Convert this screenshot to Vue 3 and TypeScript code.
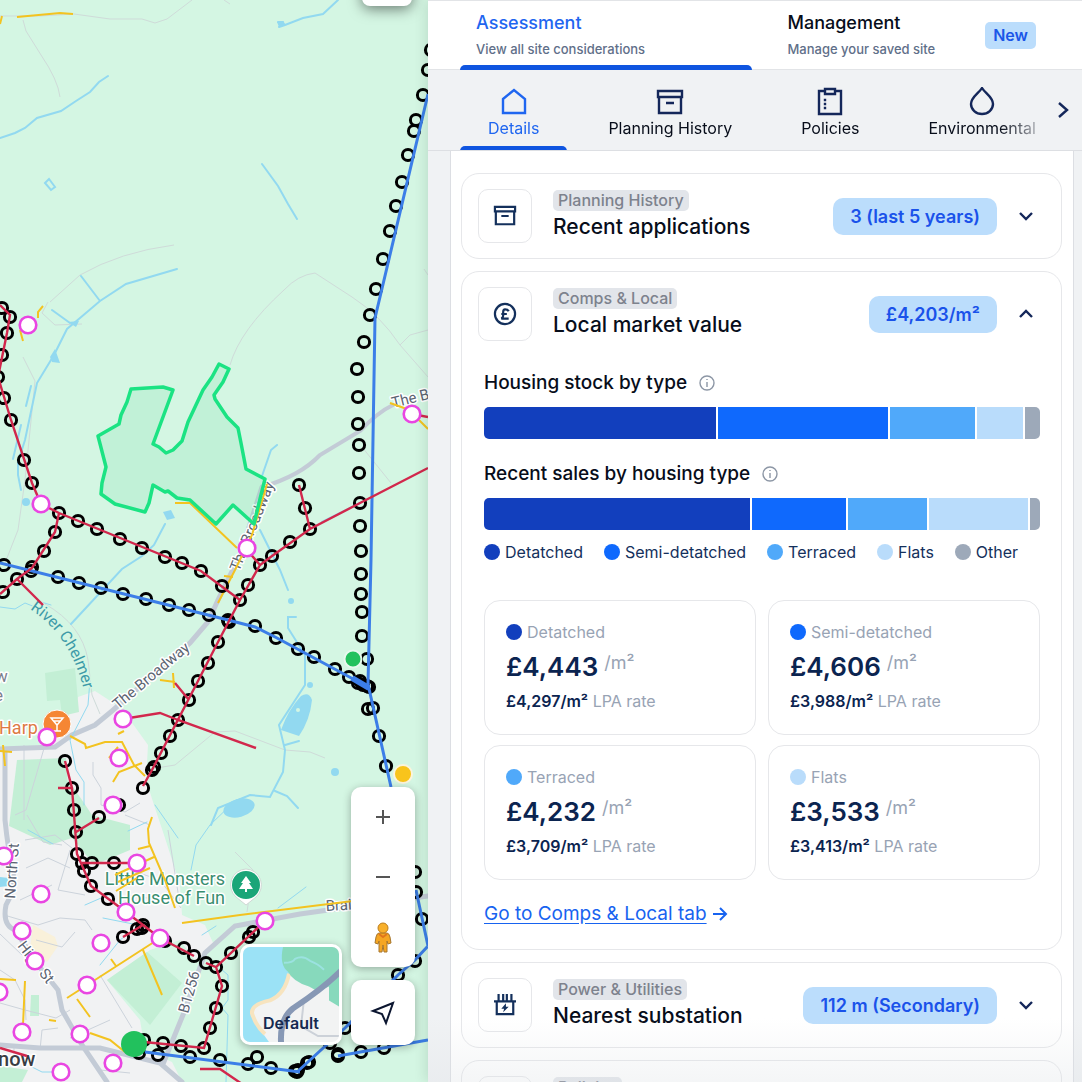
<script setup lang="ts">
import { ref } from 'vue'

type Point = [number, number]
interface Share { name: string; value: number }
interface Price { name: string; rate: string; lpa: string }

const poles: Point[] = [
  [431, 50], [428, 70], [423, 95], [416, 120], [414, 131], [408, 155], [402, 182], [396, 206], [390, 231], [383, 259],
  [376, 289], [370, 315], [364, 342], [357, 369], [358, 397], [358, 424], [359, 445], [359, 473], [360, 503], [360, 526],
  [361, 551], [361, 574], [361, 594], [362, 612], [362, 636], [367, 659], [367, 686], [369, 687], [368, 709], [373, 708],
  [379, 736], [386, 766], [4, 565], [32, 567], [31, 571], [58, 577], [79, 583], [101, 588], [123, 594], [146, 599],
  [169, 605], [189, 610], [209, 615], [228, 620], [229, 622], [255, 626], [276, 638], [298, 649], [314, 657], [335, 669],
  [349, 677], [360, 681], [358, 683], [363, 685], [2, 308], [10, 317], [7, 333], [2, 355], [-2, 377], [4, 398],
  [11, 420], [24, 460], [32, 483], [59, 513], [55, 532], [44, 551], [17, 579], [3, 592], [78, 521], [97, 529],
  [120, 539], [142, 548], [165, 557], [182, 563], [201, 571], [222, 586], [240, 600], [248, 585], [260, 565], [272, 556],
  [290, 542], [310, 529], [305, 508], [299, 485], [218, 642], [208, 663], [198, 681], [189, 700], [178, 720], [170, 736],
  [161, 753], [154, 767], [152, 770], [143, 788], [65, 761], [72, 788], [74, 810], [76, 832], [77, 854], [82, 863],
  [84, 871], [91, 886], [108, 899], [99, 817], [92, 863], [114, 863], [119, 805], [143, 925], [142, 928], [137, 929],
  [123, 937], [165, 941], [184, 948], [194, 956], [206, 963], [216, 967], [231, 953], [222, 986], [216, 1008], [210, 1028],
  [204, 1048], [181, 1046], [163, 1043], [144, 1040], [139, 1053], [158, 1055], [190, 1057], [220, 1060], [248, 1064],
  [257, 1057], [271, 1068], [295, 1071], [297, 1072], [298, 1070], [307, 1063], [309, 1062], [330, 1043], [345, 1028],
  [338, 1056], [338, 1054], [361, 1052], [384, 1048], [415, 872], [416, 892], [422, 919], [415, 961], [398, 975],
  [249, 937], [253, 932],
]

const sites: Point[] = [
  [28, 325], [41, 504], [247, 548], [412, 414], [123, 719], [119, 758], [47, 737], [113, 805], [137, 863], [126, 912],
  [160, 938], [41, 894], [22, 931], [35, 961], [101, 943], [87, 985], [22, 1032], [-1, 992], [80, 1034], [61, 1072],
  [113, 1063], [4, 856], [265, 921],
]

const stock: Share[] = [
  { name: 'detached', value: 232 },
  { name: 'semi', value: 170 },
  { name: 'terraced', value: 85 },
  { name: 'flats', value: 46 },
  { name: 'other', value: 15 },
]
const sales: Share[] = [
  { name: 'detached', value: 266 },
  { name: 'semi', value: 94 },
  { name: 'terraced', value: 79 },
  { name: 'flats', value: 99 },
  { name: 'other', value: 10 },
]
const bars = [
  { title: 'Housing stock by type', shares: stock },
  { title: 'Recent sales by housing type', shares: sales },
]
const labels: Record<string, string> = {
  detached: 'Detatched',
  semi: 'Semi-detatched',
  terraced: 'Terraced',
  flats: 'Flats',
  other: 'Other',
}
const prices: Price[] = [
  { name: 'detached', rate: '£4,443', lpa: '£4,297/m²' },
  { name: 'semi', rate: '£4,606', lpa: '£3,988/m²' },
  { name: 'terraced', rate: '£4,232', lpa: '£3,709/m²' },
  { name: 'flats', rate: '£3,533', lpa: '£3,413/m²' },
]
const sections = ['Details', 'Planning History', 'Policies', 'Environmental']
const activeSection = ref('Details')
const marketOpen = ref(true)
</script>

<template>
  <div class="app">
    <section class="map" aria-label="Site map">
      <svg class="map-canvas" viewBox="0 0 428 1082" preserveAspectRatio="xMaxYMin slice">
        <rect width="428" height="1082" fill="#d4f6e3" />
        <!-- built-up area -->
        <path fill="#f1f2f3" d="M0 751 L45 744 L66 720 L78 697 L95 691 L112 702 L125 713 L148 745 L146 780 L154 805 L165 838 L180 885 L182 915 L205 925 L214 945 L196 962 L180 940 L150 950 L107 980 L140 1020 L145 1050 L172 1062 L182 1082 L0 1082 Z" />
        <g fill="#c3efd5">
          <path d="M17 760 L66 758 L72 838 L50 845 L9 826 Z" />
          <path d="M45 673 L75 668 L79 712 L62 716 L60 700 L47 701 Z" />
          <path d="M68 780 L82 800 L92 815 L130 825 L130 850 L94 865 L70 835 Z" />
          <path d="M107 980 L147 952 L182 983 L150 1025 Z" />
          <path d="M31 995 h8 v21 h-9 z" />
          <path d="M0 1066 L28 1070 L22 1082 L0 1082 Z" />
        </g>
        <path fill="#f9f1da" d="M33 925 L55 937 L58 946 L47 962 L30 948 Z" />

        <!-- minor tracks -->
        <g fill="none" stroke="#cfdbd9" stroke-width="1">
          <path d="M0 16 L40 16 L74 14 L110 19 L142 19 L155 23 L167 19 L192 0 M23 20 L26 31 L41 55 Q58 80 60 97 M224 0 L230 4" />
          <path d="M23 357 L35 381 L25 480 L18 530 L5 563 M50 302 L80 275 Q120 252 174 245 M48 302 L42 313 L55 325 L82 324 M284 290 Q240 330 230 365 M284 290 Q298 275 315 273 L352 297 Q380 315 400 345 L428 377 M424 269 L428 275 M400 345 L410 335 L428 330 M362 447 L391 483" />
          <path d="M45 604 Q82 625 88 660 L92 695 L100 714 M150 769 L175 765 L215 732 L235 731 L285 750 L310 752 L325 758" />
          <path d="M235 852 L253 870 L247 912" />
        </g>
        <g fill="none" stroke="#ccd3db" stroke-width="1">
          <path d="M24 745 L24 820 M93 762 L93 775 L101 788 L101 805 L125 812 L140 803 M27 815 L43 842 L62 845 M25 840 L55 835 L72 848 M26 868 L48 858 L70 868 M70 850 L58 890 L85 895 M20 900 L52 885 M4 915 L38 925 L60 918 L85 920 L92 930 M36 940 L62 947 L75 932 M70 1038 L110 1020 M100 975 L132 1028 M14 1048 L14 1060 M40 1050 L42 1030 L58 1028 M100 1070 L130 1073 M130 870 L160 880 L181 908 M168 830 L180 905 M128 895 L160 900 M125 815 L150 825 M45 745 L26 810 L15 815" />
          <path d="M0 934 L22 955 M0 970 L15 980 L25 1000 L26 1020 M0 1003 L25 1010 L56 1018 L70 1010" />
        </g>
        <g fill="none" stroke="#c3cbd6" stroke-linecap="round">
          <path stroke-width="5" d="M0 749 L55 747 L72 735 L95 725 L112 711 L190 643 L208 622 L218 600 L240 555 L262 487" />
          <path stroke-width="4" d="M262 487 Q300 476 320 455 Q345 440 360 431 Q378 412 393 405" />
          <path stroke-width="5" d="M5 750 L5 820 Q8 850 13 870 Q15 890 6 905 Q2 925 15 930 L38 965 L58 990 L62 1010 L82 1045 L107 1082" />
          <path stroke-width="5" d="M0 1045 L40 1048 L100 1048 L160 1063 L182 1082 M163 1064 L185 1010 L205 953 L235 926 L300 914 L428 896" />
        </g>

        <!-- watercourses -->
        <g fill="none" stroke="#92d9f0" stroke-width="2" stroke-linecap="round">
          <path d="M0 138 L15 133 L25 128 L37 118 L61 111 L76 101 L90 92 L99 82 L108 76 M279 27 L285 25 L303 18 L323 14 L338 0 M278 22 L283 22 M262 164 L278 186 L288 204 L297 219" />
          <path d="M177 269 L126 284 L100 301 L80 318 L67 329 L54 355 L37 383 L25 440 L18 462 L18 475 L21 490 M81 276 L100 301 M52 310 L70 323 M31 386 L26 406 M21 425 L13 459 M277 445 L271 450 L262 476" />
          <path d="M165 524 L154 545 L142 556 L122 569 L71 624 M360 503 L322 522 M260 530 L280 570 L288 590 M296 617 L288 617 L288 628 L305 655 L305 685 L279 725 L285 750 L283 772 L270 797 L250 795 L218 808 L211 825 M299 741 L285 745 M275 791 L287 796 L298 808" />
          <path d="M0 607 L15 609 L25 603 L35 607 L41 602 L51 605 M90 680 L88 705 L70 740 L76 770 L84 782 L84 805 M210 825 L196 845 L191 870 M236 800 L210 825 M155 805 L178 838 M28 830 L53 844 M128 831 L147 822 M85 905 L108 895 M103 918 L143 926 M140 925 L120 940 L100 965 M32 1067 L42 1072 L62 1072 M202 935 L216 926 M278 908 L306 887 M221 969 L228 975 L228 1000 L222 1008 L228 1015 L226 1082" stroke-width="1" />
        </g>
        <g fill="#92d9f0">
          <path d="M301 696 Q309 691 312 700 Q310 720 299 736 L281 730 Q288 710 301 696Z" />
          <ellipse cx="239" cy="808" rx="16" ry="9" transform="rotate(-15 239 808)" />
          <path d="M277 22 l6 -1 l3 4 l-7 2z M50 357 l5 -8 l5 14 l-8 -1z M68 322 l11 -1 l-3 6z M163 512 l8 -2 l4 8 l-8 2z" />
          <path d="M45 183 l4 -4 l6 8 l-4 3z" fill="none" stroke="#92d9f0" stroke-width="2" />
          <circle cx="26" cy="502" r="4" /><circle cx="335" cy="772" r="4" /><circle cx="291" cy="601" r="3" />
          <circle cx="310" cy="685" r="3" /><path d="M0 877 L9 878 L8 886 L0 887Z" />
        </g>
        <circle cx="298" cy="710" r="2" fill="#d4f6e3" />

        <!-- street labels -->
        <g class="street">
          <text x="118" y="710" transform="rotate(-40 118 710)">The Broadway</text>
          <text x="239" y="572" transform="rotate(-68 239 572)">The Broadway</text>
          <text x="393" y="408" transform="rotate(-14 393 408)">The Br</text>
          <text x="15" y="899" transform="rotate(-86 15 899)">North St</text>
          <text x="17" y="946" transform="rotate(52 17 946)">High St</text>
          <text x="188" y="1014" transform="rotate(-74 188 1014)">B1256</text>
          <text x="326" y="911" transform="rotate(-3 326 911)">Brai</text>
        </g>
        <path id="river-label" fill="none" d="M30 609 Q74 638 86 700" />
        <text class="river"><textPath href="#river-label">River Chelmer</textPath></text>
        <text class="suburb" x="-5" y="682">w</text>
        <text class="suburb" x="-6" y="701">e</text>
        <text class="poi-food" x="-1" y="734">Harp</text>
        <g class="poi-park">
          <text x="225" y="885">Little Monsters</text>
          <text x="225" y="904">House of Fun</text>
        </g>
        <text class="town" x="-2" y="1066">now</text>

        <!-- low voltage cables -->
        <g fill="none" stroke="#f3c320" stroke-width="2">
          <path d="M17 17 L60 13 L73 14 M2 16 L0 24 M43 306 L38 312 L38 318 M20 330 L23 341 M390 403 L404 408 L412 414 M419 420 L428 429" />
          <path d="M267 484 L252 535 L235 570 L218 603 M224 576 L233 577 M175 503 L190 503 L237 548 M160 680 L175 682 M173 673 L174 688" />
          <path d="M70 736 L85 744 L86 748 L105 742 L122 742 L134 765 L145 776 M113 782 L119 772 L142 763 M118 747 L109 758 M118 734 L124 731 M0 751 L12 752 M3 745 L5 766 M152 817 L148 829 L149 843 L165 880 L175 908 M138 849 L150 846 M137 878 L116 891 M150 868 L118 882 M154 857 L115 875" />
          <path d="M182 923 L240 915 L353 901 M154 942 L67 998 M143 950 L162 995 M111 959 L116 966 M77 999 L90 1017 M90 1033 L110 1040 L125 1052 M25 981 L23 1025 M0 979 L16 980 M49 1020 L56 1021" />
        </g>

        <path class="parcel" d="M131 389 L163 387 L173 390 L153 444 L159 447 L166 453 L173 450 L182 441 L188 422 L203 390 L212 377 L219 364 L229 369 L223 382 L214 395 L215 399 L227 417 L238 428 L241 443 L246 469 L265 479 L259 503 L254 524 L233 505 L216 524 L190 500 L177 498 L168 491 L165 492 L153 485 L149 503 L145 512 L115 504 L101 494 L102 483 L106 467 L98 436 L119 424 L121 415 L127 402 Z" />

        <g fill="none" stroke="#000" stroke-width="3">
          <circle v-for="(p, i) in poles" :key="i" :cx="p[0]" :cy="p[1]" r="5.6" />
        </g>
        <!-- 33kV and 132kV lines -->
        <g fill="none" stroke="#3c7ee8" stroke-width="3">
          <path d="M428 94 L380 297 L375 318 L371 560 L368 684 L391 787" />
          <path d="M0 563 L228 620 L255 627 L277 638 L368 687" />
          <path d="M145 1052 L300 1072 M297 1072 L345 1028 L398 975 L415 960 L428 946 L416 890 M338 1056 L428 1040" />
        </g>
        <path d="M352 678 L369 688" stroke="#3c7ee8" stroke-width="6" />
        <!-- 11kV lines -->
        <g fill="none" stroke="#d2274c" stroke-width="2.4">
          <path d="M0 305 L10 315 L7 333 L-2 377 L11 420 L32 483 L41 504 L59 513 L201 571 L240 600 M59 513 L55 532 L32 568 L17 579 L0 594 M17 579 L43 605" />
          <path d="M428 468 L360 503 L310 529 L272 556 L260 565 L240 600 L218 642 L198 681 L152 770 L143 786 M299 485 L310 529 M247 550 L260 565 M175 683 L189 700 M123 719 L160 713 L178 720 L256 748" />
          <path d="M65 761 L72 788 L77 854 L91 886 L126 912 L143 925 L160 938 L194 956 M58 788 L72 788 M76 832 L99 818 M82 863 L137 863 M143 925 L123 937 M206 963 L216 967 L265 921 M216 967 L222 986 L204 1048 L134 1041 M200 1069 L220 1069 L245 1086 M0 1048 L27 1056 M412 414 L428 417" />
        </g>

        <circle cx="57" cy="724" r="14" fill="#f58634" stroke="#fff" stroke-width="1" />
        <path d="M51 718 H63 L57 725 Z M57 725 V731 M53 731 H61 M54 721 H60" fill="none" stroke="#fff" stroke-width="1.5" />
        <g class="sites">
          <circle v-for="(p, i) in sites" :key="i" :cx="p[0]" :cy="p[1]" r="8.3" />
        </g>
        <circle cx="134" cy="1044" r="13" fill="#22c15d" />
        <circle cx="353" cy="659" r="8.5" fill="#22c15d" stroke="#e6f8ed" stroke-width="2" />
        <circle cx="403" cy="774" r="9" fill="#f8c41c" stroke="#fbf4dd" stroke-width="2" />
        <path d="M246 869 a16 16 0 0 1 10 28 L246 905 L236 897 a16 16 0 0 1 10 -28Z" fill="#fff" stroke="#cfd8d4" stroke-width="1" />
        <circle cx="246" cy="885" r="14" fill="#1aa578" />
        <path d="M246 876 L251 883 H249 L253 889 H247 V892 H245 V889 H239 L243 883 H241 Z" fill="#fff" />
      </svg>

      <div class="map-tool"></div>
      <div class="map-controls">
        <button class="basemap" type="button">
          <svg viewBox="0 0 96 96" preserveAspectRatio="none" aria-hidden="true">
            <rect width="96" height="96" fill="#f2f3f3" />
            <path d="M0 0 H46 Q50 20 45 30 Q40 47 26 53 Q8 56 9 68 Q15 82 26 96 H0Z" fill="#9be2f6" />
            <path d="M46 27 Q42 48 27 54 Q8 58 9 67 Q13 80 22 88" fill="none" stroke="#f7e4bf" stroke-width="4" />
            <path d="M40 0 H96 V60 L86 54 V40 L75 45 L66 40 Q50 35 45 25 Q36 18 40 0Z" fill="#87d9bc" />
            <path d="M41 16 Q50 16 52 12 Q60 8 67 14 Q75 17 81 23" fill="none" stroke="#9be2e0" stroke-width="2" />
            <path d="M61 53 L58 80 L75 90 H96" fill="none" stroke="#ccd1d8" stroke-width="2" />
            <path d="M38 96 Q37 72 50 62 Q80 42 98 24" fill="none" stroke="#8798b5" stroke-width="6" />
          </svg>
          <span>Default</span>
        </button>
        <div class="map-stack">
          <div class="zoom">
            <button type="button" aria-label="Zoom in">
              <svg width="20" height="20" viewBox="0 0 20 20"><path d="M10 3 V17 M3 10 H17" stroke="#555" stroke-width="2" /></svg>
            </button>
            <button type="button" aria-label="Zoom out">
              <svg width="20" height="20" viewBox="0 0 20 20"><path d="M3 10 H17" stroke="#555" stroke-width="2" /></svg>
            </button>
            <button type="button" aria-label="Street View">
              <svg width="20" height="34" viewBox="0 0 20 34">
                <path d="M6 13 H14 Q16 13 17 17 L18 23 L15 24 L14 21 V32 H11 L10 25 L9 32 H6 V21 L5 24 L2 23 L3 17 Q4 13 6 13Z" fill="#f5a623" stroke="#a7772e" stroke-width="1" />
                <circle cx="10" cy="8" r="5" fill="#f8b02b" stroke="#bd7e1d" stroke-width="1" />
                <path d="M6 14 L10 17 L14 14" fill="none" stroke="#e0761c" stroke-width="2" />
              </svg>
            </button>
          </div>
          <button class="locate" type="button" aria-label="Find my location">
            <svg width="28" height="28" viewBox="0 0 28 28"><path d="M24 4 L4 12 L13 15 L17 24 Z" fill="none" stroke="#0c1630" stroke-width="2" /></svg>
          </button>
        </div>
      </div>
    </section>

    <main class="panel">
      <header class="modes">
        <button class="mode active" type="button">
          <span class="mode-text"><span class="mode-name">Assessment</span><small>View all site considerations</small></span>
        </button>
        <button class="mode" type="button">
          <span class="mode-text"><span class="mode-name">Management</span><small>Manage your saved site</small></span>
          <span class="new">New</span>
        </button>
      </header>

      <nav class="sections" aria-label="Assessment sections">
        <div class="section-list">
          <button
            v-for="name in sections"
            :key="name"
            type="button"
            class="section"
            :class="{ active: name === activeSection }"
            @click="activeSection = name"
          >
            <svg v-if="name === 'Details'" viewBox="0 0 30 30"><path d="M4 12 L15 3 L26 12 V26 H4 Z" /></svg>
            <svg v-else-if="name === 'Planning History'" viewBox="0 0 30 30"><path d="M3 4 H27 V10 H3 Z M4 10 V26 H26 V10 M11 16 H19" /></svg>
            <svg v-else-if="name === 'Policies'" viewBox="0 0 30 30"><path d="M10 4 H4 V27 H26 V4 H20 M10 2 H20 V7 H10 Z" /><path d="M10 13 v0 M10 17 v0 M10 21 v0" class="dots" /></svg>
            <svg v-else viewBox="0 0 30 30"><path d="M15 1 C18 6 26 10 26 17 A11 10 0 0 1 4 17 C4 10 12 6 15 1 Z" /></svg>
            <span>{{ name }}</span>
          </button>
        </div>
        <button class="next" type="button" aria-label="More sections">
          <svg width="20" height="20" viewBox="0 0 20 20"><path d="M6 3 L14 10 L6 17" /></svg>
        </button>
      </nav>

      <div class="content">
        <div class="sheet">
          <article class="card">
            <button class="card-head" type="button">
              <span class="tile"><svg viewBox="0 0 24 24"><path d="M1 2 H23 V7 H1 Z M2 7 V21 H22 V7 M8 12 H16" /></svg></span>
              <span class="heading"><span class="tag">Planning History</span><span class="title">Recent applications</span></span>
              <span class="badge">3 (last 5 years)</span>
              <svg class="chevron" viewBox="0 0 16 16"><path d="M2 5 L8 11 L14 5" /></svg>
            </button>
          </article>

          <article class="card">
            <button class="card-head" type="button" :aria-expanded="marketOpen" @click="marketOpen = !marketOpen">
              <span class="tile">
                <svg viewBox="0 0 24 24"><circle cx="12" cy="12" r="11" /><path d="M16 9 Q15 7 12 7 Q10 7 10 10 V14 Q10 16 8 17 H16 M8 12 H14" /></svg>
              </span>
              <span class="heading"><span class="tag">Comps &amp; Local</span><span class="title">Local market value</span></span>
              <span class="badge">£4,203/m²</span>
              <svg class="chevron" viewBox="0 0 16 16"><path d="M2 11 L8 5 L14 11" /></svg>
            </button>

            <div v-if="marketOpen" class="market">
              <section v-for="bar in bars" :key="bar.title" class="breakdown">
                <h3>
                  {{ bar.title }}
                  <svg viewBox="0 0 18 18" aria-hidden="true"><circle cx="9" cy="9" r="7" /><path d="M9 8 V13 M9 5 V6" /></svg>
                </h3>
                <div class="bar">
                  <span v-for="s in bar.shares" :key="s.name" :class="s.name" :style="{ flexGrow: s.value }"></span>
                </div>
              </section>
              <ul class="legend">
                <li v-for="s in stock" :key="s.name"><i class="dot" :class="s.name"></i>{{ labels[s.name] }}</li>
              </ul>
              <div class="prices">
                <div v-for="p in prices" :key="p.name" class="price">
                  <div class="kind"><i class="dot" :class="p.name"></i>{{ labels[p.name] }}</div>
                  <div class="rate"><strong>{{ p.rate }}</strong><span>/m²</span></div>
                  <div class="lpa"><b>{{ p.lpa }}</b> LPA rate</div>
                </div>
              </div>
              <a class="more" href="#comps">
                <span>Go to Comps &amp; Local tab</span>
                <svg viewBox="0 0 16 16" aria-hidden="true"><path d="M1 8 H14 M8 2 L14 8 L8 14" /></svg>
              </a>
            </div>
          </article>

          <article class="card">
            <button class="card-head" type="button">
              <span class="tile">
                <svg viewBox="0 0 24 24"><path d="M0 8 H24 M3 8 V22 H21 V8 M5 0 V8 M10 0 V8 M14 0 V8 M19 0 V8" /><path d="M13 10 L8 16 H11 L10 20 L16 14 H13 Z" class="solid" /></svg>
              </span>
              <span class="heading"><span class="tag">Power &amp; Utilities</span><span class="title">Nearest substation</span></span>
              <span class="badge">112 m (Secondary)</span>
              <svg class="chevron" viewBox="0 0 16 16"><path d="M2 5 L8 11 L14 5" /></svg>
            </button>
          </article>

          <article class="card">
            <button class="card-head" type="button">
              <span class="tile"></span>
              <span class="heading"><span class="tag">Policies</span><span class="title">&nbsp;</span></span>
            </button>
          </article>
        </div>
      </div>
    </main>
  </div>
</template>

<style>
body {
  margin: 0;
  overflow: hidden;
}
</style>

<style scoped>
.app {
  display: grid;
  grid-template-columns: minmax(0, 428fr) minmax(0, 654fr);
  height: 100vh;
  font-family: Inter, 'Liberation Sans', sans-serif;
  color: #070d1a;
}
button {
  margin: 0;
  padding: 0;
  border: 0;
  background: none;
  font: inherit;
  color: inherit;
  text-align: left;
  cursor: pointer;
}

.map {
  position: relative;
  overflow: hidden;
  background: #d4f6e3;
}
.map-canvas {
  display: block;
  width: 100%;
  height: 100%;
}
.map text {
  font-family: Roboto, sans-serif;
  stroke: #fff;
  stroke-width: 3px;
  stroke-linejoin: round;
  paint-order: stroke;
}
.street text {
  font-size: 15px;
  fill: #5b6472;
}
.map .river {
  font-size: 16px;
  fill: #3d9aa8;
  stroke: #d4f6e3;
}
.map .suburb {
  font-size: 17px;
  fill: #7c8190;
}
.map .poi-food {
  font-size: 18px;
  fill: #dd7a44;
}
.map .poi-park text {
  font-size: 18px;
  text-anchor: end;
  fill: #398e70;
}
.map .town {
  font-size: 20px;
  font-weight: 500;
  fill: #3a3d44;
}
.parcel {
  fill: rgba(120, 225, 170, 0.2);
  stroke: #1be383;
  stroke-width: 3.5;
  stroke-linejoin: round;
}
.sites circle {
  fill: #fff;
  stroke: #e946e2;
  stroke-width: 2.6;
}
.map-tool {
  position: absolute;
  top: -44px;
  right: 16px;
  width: 50px;
  height: 50px;
  border-radius: 8px;
  background: #fff;
  box-shadow: 0 3px 14px rgba(0, 0, 0, 0.5);
}
.map-controls {
  position: absolute;
  right: 13px;
  bottom: 37px;
  display: flex;
  align-items: flex-end;
  gap: 9px;
}
.map-stack {
  display: flex;
  flex-direction: column;
  gap: 13px;
}
.zoom,
.locate,
.basemap {
  border-radius: 10px;
  background: #fff;
  box-shadow: 0 2px 8px rgba(0, 0, 0, 0.3);
}
.zoom button {
  display: flex;
  align-items: center;
  justify-content: center;
  width: 64px;
  height: 60px;
}
.locate {
  display: flex;
  align-items: center;
  justify-content: center;
  width: 64px;
  height: 65px;
}
.basemap {
  position: relative;
  width: 102px;
  height: 101px;
  border: 3px solid #fff;
  overflow: hidden;
}
.basemap svg {
  display: block;
  width: 100%;
  height: 100%;
}
.basemap span {
  position: absolute;
  right: 0;
  bottom: 9px;
  left: 0;
  text-align: center;
  font-size: 16px;
  font-weight: 600;
  line-height: 20px;
  color: #16294f;
}

.panel {
  position: relative;
  display: flex;
  flex-direction: column;
  min-height: 0;
  background: #f0f2f4;
  box-shadow: -2px 0 12px rgba(0, 40, 20, 0.12);
}
.panel::after {
  content: '';
  position: absolute;
  right: 0;
  bottom: 0;
  left: 0;
  height: 64px;
  background: linear-gradient(rgba(220, 224, 228, 0), rgba(220, 224, 228, 0.3));
  pointer-events: none;
}
.modes {
  display: grid;
  grid-template-columns: 1fr 1fr;
  gap: 20px;
  padding: 0 19px 0 32px;
  border-top: 1px solid #e2e4e7;
  border-bottom: 1px solid #e2e4e7;
  background: #fff;
}
.mode {
  display: flex;
  align-items: center;
  justify-content: space-between;
  height: 68px;
  padding: 0 27px 0 16px;
}
.mode-text {
  display: flex;
  flex-direction: column;
  gap: 4px;
}
.mode-name {
  font-size: 18px;
  font-weight: 500;
  line-height: 24px;
}
.mode small {
  font-size: 13px;
  font-weight: 500;
  line-height: 20px;
  color: #5f6f89;
}
.mode.active,
.section.active {
  position: relative;
  color: #1f66f0;
}
.mode.active::after,
.section.active::after {
  content: '';
  position: absolute;
  right: 0;
  bottom: -1px;
  left: 0;
  height: 5px;
  border-radius: 5px 5px 0 0;
  background: #0f55e0;
}
.new {
  padding: 0 8px;
  border-radius: 5px;
  background: #bbddfc;
  font-size: 16px;
  font-weight: 600;
  line-height: 27px;
  color: #1a56e8;
}
.sections {
  display: flex;
  align-items: center;
  height: 80px;
  padding-left: 32px;
  border-bottom: 1px solid #dddfe3;
}
.section-list {
  display: flex;
  flex: 1;
  gap: 13px;
  height: 100%;
  min-width: 0;
  mask-image: linear-gradient(to right, #000 calc(100% - 44px), rgba(0, 0, 0, 0.2));
}
.section {
  display: flex;
  flex: none;
  flex-direction: column;
  align-items: center;
  padding: 17px 28px 0;
  font-size: 16px;
  font-weight: 400;
  line-height: 22px;
}
.section svg {
  width: 30px;
  height: 30px;
  fill: none;
  stroke: #14275a;
  stroke-width: 2.4;
}
.section.active svg {
  stroke: #1f66f0;
}
.section .dots {
  stroke-linecap: square;
}
.next {
  display: flex;
  padding: 0 9px 0 10px;
}
.next svg,
.chevron {
  fill: none;
  stroke: #14275a;
  stroke-width: 2.4;
}

.content {
  flex: 1;
  min-height: 0;
  overflow: hidden;
  padding: 0 8px 0 22px;
}
.sheet {
  display: flex;
  flex-direction: column;
  gap: 12px;
  padding: 22px 11px 20px 10px;
  border: 1px solid #dcdee3;
  border-top: 0;
  background: #fff;
}
.card {
  border: 1px solid #e6e7ea;
  border-radius: 18px;
}
.card-head {
  display: flex;
  align-items: center;
  width: 100%;
  padding: 15px 16px;
}
.tile {
  display: flex;
  flex: none;
  align-items: center;
  justify-content: center;
  box-sizing: border-box;
  width: 54px;
  height: 54px;
  border: 1px solid #e6e7ea;
  border-radius: 10px;
}
.tile svg {
  width: 22px;
  height: 22px;
  overflow: visible;
  fill: none;
  stroke: #14305c;
  stroke-width: 2.4;
}
.tile .solid {
  fill: #14305c;
  stroke: none;
}
.heading {
  display: flex;
  flex: 1;
  flex-direction: column;
  align-items: flex-start;
  margin-left: 21px;
}
.tag {
  padding: 0 5px;
  border-radius: 5px;
  background: #e2e5ea;
  font-size: 16px;
  font-weight: 500;
  line-height: 21px;
  color: #7d828d;
}
.title {
  font-size: 21px;
  font-weight: 500;
  line-height: 32px;
}
.badge {
  padding: 0 17px;
  border-radius: 10px;
  background: #bbddfc;
  font-size: 18px;
  font-weight: 600;
  line-height: 37px;
  color: #1a52ea;
}
.chevron {
  width: 16px;
  height: 16px;
  margin: 0 11px 0 21px;
}

.market {
  display: flex;
  flex-direction: column;
  padding: 15px 21px 23px 22px;
}
.breakdown {
  margin-bottom: 23px;
}
.breakdown:nth-child(2) {
  margin-bottom: 11px;
}
h3 {
  display: flex;
  align-items: center;
  gap: 11px;
  margin: 0 0 12px;
  font-size: 19px;
  font-weight: 500;
  line-height: 24px;
}
h3 svg {
  width: 18px;
  height: 18px;
  fill: none;
  stroke: #8c96a5;
  stroke-width: 1.4;
}
.bar {
  display: flex;
  gap: 2px;
  height: 32px;
  border-radius: 5px;
  overflow: hidden;
}
.bar span {
  flex: 1 1 0;
}
.detached {
  background: #123fbd;
}
.semi {
  background: #0f69fd;
}
.terraced {
  background: #50a9fa;
}
.flats {
  background: #b9dcfb;
}
.other {
  background: #9da9b9;
}
.legend {
  display: flex;
  gap: 21px;
  margin: 0 0 37px;
  padding: 0;
  list-style: none;
  font-size: 16px;
  line-height: 22px;
  color: #14305c;
}
.legend li,
.kind {
  display: flex;
  align-items: center;
  gap: 5px;
}
.dot {
  width: 16px;
  height: 16px;
  border-radius: 50%;
}
.prices {
  display: grid;
  grid-template-columns: 1fr 1fr;
  gap: 10px 12px;
}
.price {
  padding: 20px 21px 22px;
  border: 1px solid #e6e7ea;
  border-radius: 16px;
  color: #98a3b4;
  font-size: 16px;
  line-height: 22px;
}
.rate {
  display: flex;
  gap: 6px;
  margin: 6px 0 5px;
}
.rate strong {
  font-size: 26px;
  font-weight: 600;
  line-height: 36px;
  color: #0b2450;
}
.rate span {
  font-size: 18px;
  line-height: 28px;
}
.lpa b {
  font-weight: 600;
  color: #0b2450;
}
.more {
  display: flex;
  align-items: center;
  align-self: flex-start;
  gap: 5px;
  margin-top: 22px;
  font-size: 19px;
  line-height: 24px;
  color: #1763f0;
  text-decoration: none;
}
.more span {
  text-decoration: underline;
  text-underline-offset: 3px;
}
.more svg {
  width: 16px;
  height: 16px;
  fill: none;
  stroke: #1763f0;
  stroke-width: 2;
}
</style>
